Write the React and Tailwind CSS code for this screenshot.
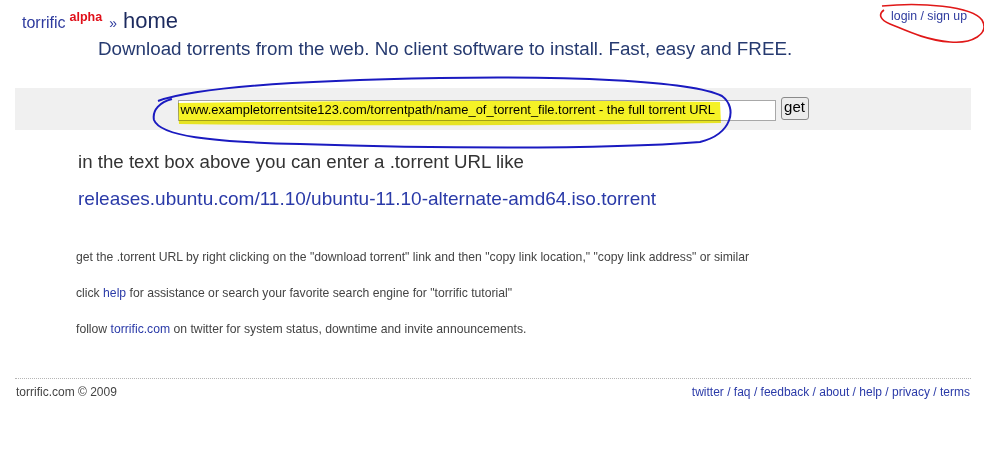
import React from "react";

export default function App() {
  return (
    <div className="relative w-[984px] h-[471px] bg-white overflow-hidden font-['Liberation_Sans',Arial,sans-serif] text-[#444]">
      {/* header */}
      <div className="flex justify-between items-start pl-[22px] pr-[17px] pt-[4px] h-[34px]">
        <div className="flex items-baseline">
          <span className="text-[16px] text-[#2d3a9e]">torrific</span>
          <span className="ml-[4px] text-[12.5px] font-bold text-[#e0101a] relative -top-[7px]">alpha</span>
          <span className="ml-[7px] text-[14px] text-[#2d3a9e]">»</span>
          <span className="ml-[6px] text-[22px] text-[#1c2a5e]">home</span>
        </div>
        <a className="text-[12.3px] text-[#2d3a9e] mt-[3px]">login / sign up</a>
      </div>
      {/* tagline */}
      <div className="pl-[98px] text-[18.8px] leading-[30px] text-[#263a70]">
        Download torrents from the web. No client software to install. Fast, easy and FREE.
      </div>
      {/* search bar */}
      <div className="ml-[15px] w-[956px] mt-[24px] h-[42px] bg-[#f0f0f0] flex items-center justify-center gap-[5px]">
        <div className="w-[598px] h-[21px] mt-[2px] bg-white border border-[#a8a8a8] flex items-center pl-[2px] text-[12.9px] text-black whitespace-nowrap overflow-hidden">
          www.exampletorrentsite123.com/torrentpath/name_of_torrent_file.torrent - the full torrent URL
        </div>
        <button className="w-[28px] h-[23px] -mt-[2px] bg-[#ececec] border border-[#8a8a8a] rounded-[3px] text-[15px] leading-[18px] text-black pb-[2px]">
          get
        </button>
      </div>
      {/* examples */}
      <div className="pl-[78px] text-[18.7px] text-[#333] mt-[21px] leading-[22px]">
        in the text box above you can enter a .torrent URL like
      </div>
      <div className="pl-[78px] text-[19px] text-[#2a3aa8] mt-[15px] leading-[22px]">
        releases.ubuntu.com/11.10/ubuntu-11.10-alternate-amd64.iso.torrent
      </div>
      <div className="pl-[76px] text-[12.2px] text-[#444] mt-[40px] flex flex-col gap-[22px] leading-[14px]">
        <p>get the .torrent URL by right clicking on the "download torrent" link and then "copy link location," "copy link address" or similar</p>
        <p>click <a className="text-[#2a3aa8]">help</a> for assistance or search your favorite search engine for "torrific tutorial"</p>
        <p>follow <a className="text-[#2a3aa8]">torrific.com</a> on twitter for system status, downtime and invite announcements.</p>
      </div>
      {/* footer */}
      <div className="ml-[15px] w-[956px] mt-[42px] border-t border-dotted border-[#b5b5b5] flex justify-between pt-[6px] text-[12px] leading-[14px]">
        <span className="pl-[1px] text-[#444]">torrific.com © 2009</span>
        <span className="pr-[1px] text-[#2a3aa8]">
          twitter / faq / feedback / about / help / privacy / terms
        </span>
      </div>

      {/* annotations */}
      <svg className="absolute left-0 top-0 pointer-events-none" width="984" height="471">
        <path d="M178 103 Q 450 99 720 102 L 721 123 Q 450 127 179 124 Z" fill="#f4f000" opacity="0.85" style={{ mixBlendMode: "multiply" }} />
        <path
          d="M158 101 C 200 86, 320 80, 440 78 C 560 76, 690 80, 722 96 C 738 108, 732 134, 700 142 C 600 150, 420 148, 300 144 C 210 142, 160 136, 154 120 C 152 110, 160 102, 172 99"
          fill="none" stroke="#1a1ac0" strokeWidth="2" />
        <path
          d="M882 6 C 920 2, 972 6, 982 20 C 990 34, 972 44, 950 42 C 925 40, 905 30, 890 24 C 880 20, 878 14, 884 10"
          fill="none" stroke="#e01818" strokeWidth="1.6" />
      </svg>
    </div>
  );
}
